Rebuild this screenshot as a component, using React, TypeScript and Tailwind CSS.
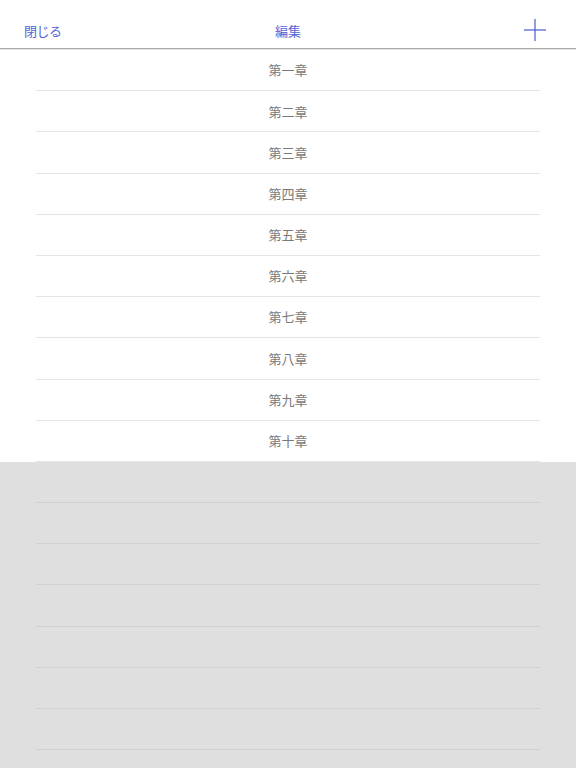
import React from "react";

const chapters = ["第一章", "第二章", "第三章", "第四章", "第五章", "第六章", "第七章", "第八章", "第九章", "第十章"];

export default function App() {
  const font = { fontFamily: '"Noto Sans CJK JP", "Noto Sans", sans-serif' };
  return (
    <div className="w-[576px] h-[768px] bg-[#dfdfdf] overflow-hidden flex flex-col" style={font}>
      <div className="h-[48px] shrink-0 bg-white flex items-center justify-between pt-[12px] pl-[24px] pr-[30px] relative">
        <span className="text-[13px] tracking-[-0.5px] text-[#5566d6] leading-none">閉じる</span>
        <span className="absolute left-1/2 top-[24px] -translate-x-1/2 text-[13px] text-[#5566d6] leading-none">編集</span>
        <svg width="22" height="22" viewBox="0 0 22 22">
          <line x1="11" y1="0" x2="11" y2="22" stroke="#4a5cc8" strokeWidth="1.2" />
          <line x1="0" y1="11" x2="22" y2="11" stroke="#4a5cc8" strokeWidth="1.2" />
        </svg>
      </div>
      <div className="h-[1px] bg-[#a9a9a9] shrink-0" />
      <div className="h-[1px] bg-[#e6e6e6] shrink-0" />
      <div className="bg-white flex flex-col">
        {chapters.map((c) => (
          <div key={c} className="h-[41.2px] px-[36px]">
            <div className="h-full border-b border-[#e4e4e4] flex items-center justify-center text-[13px] text-[#7a7a7a]">
              {c}
            </div>
          </div>
        ))}
      </div>
      <div className="flex flex-col">
        {Array.from({ length: 8 }).map((_, i) => (
          <div key={i} className="h-[41.2px] px-[36px] shrink-0">
            <div className="h-full border-b border-[#d0d0d0]" />
          </div>
        ))}
      </div>
    </div>
  );
}
